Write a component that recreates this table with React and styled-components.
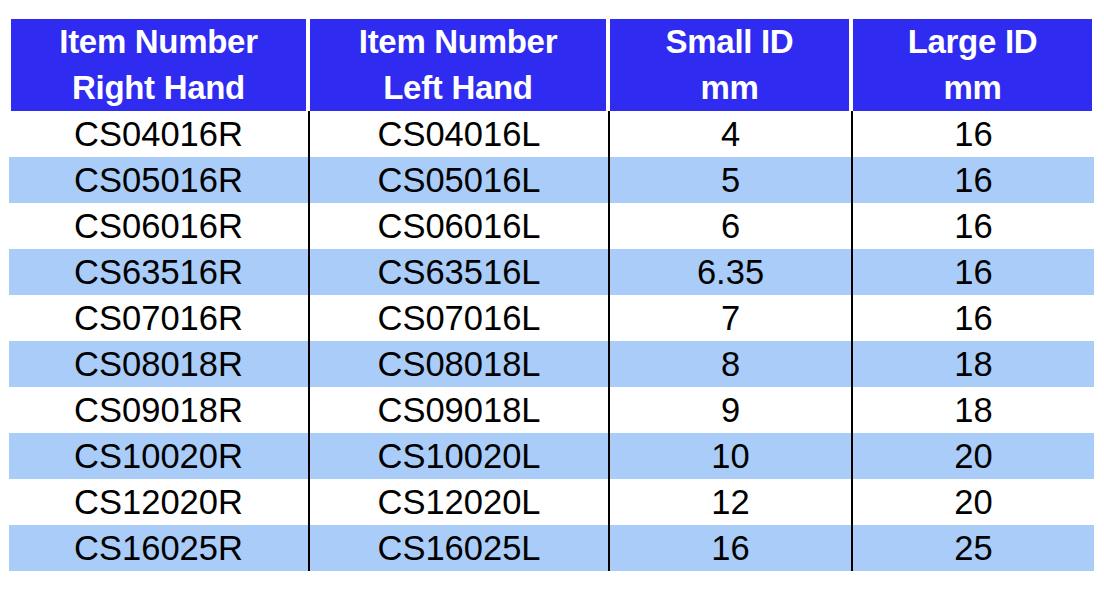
import React from 'react';
import styled, { createGlobalStyle } from 'styled-components';

const GlobalStyle = createGlobalStyle`
    body {
        margin: 0;
        background: #fff;
        font-family: "Liberation Sans", Arial, sans-serif;
    }
`;

const rows = [
    ['CS04016R', 'CS04016L', '4', '16'],
    ['CS05016R', 'CS05016L', '5', '16'],
    ['CS06016R', 'CS06016L', '6', '16'],
    ['CS63516R', 'CS63516L', '6.35', '16'],
    ['CS07016R', 'CS07016L', '7', '16'],
    ['CS08018R', 'CS08018L', '8', '18'],
    ['CS09018R', 'CS09018L', '9', '18'],
    ['CS10020R', 'CS10020L', '10', '20'],
    ['CS12020R', 'CS12020L', '12', '20'],
    ['CS16025R', 'CS16025L', '16', '25'],
];

const headers = [
    ['Item Number', 'Right Hand'],
    ['Item Number', 'Left Hand'],
    ['Small ID', 'mm'],
    ['Large ID', 'mm'],
];

const Table = styled.div`
    width: 1085px;
    margin: 19px 0 0 9px;

    display: grid;
    grid-template-columns: 299px 300px 243px 243px;
`;

const HeadCell = styled.div`
    height: 92px;

    border: solid #fff;
    border-width: 0 2px;
    background-color: #2f2bf1;
    color: #fff;

    font-weight: bold;
    font-size: 33px;
    line-height: 46px;
    text-align: center;
    letter-spacing: -0.3px;
`;

const Cell = styled.div`
    height: 46px;

    border-left: ${(props) => (props.first ? 'none' : '2px solid #000')};
    background-color: ${(props) => (props.shaded ? '#aaccf8' : '#fff')};
    color: #000;

    font-size: 34.5px;
    line-height: 46px;
    text-align: center;
`;

function App() {
    return (
        <>
            <GlobalStyle />
            <Table>
                {headers.map(([a, b], i) => (
                    <HeadCell key={'h' + i}>
                        {a}<br />{b}
                    </HeadCell>
                ))}
                {rows.map((row, r) =>
                    row.map((value, c) => (
                        <Cell key={r + '-' + c} first={c === 0} shaded={r % 2 === 1}>
                            {value}
                        </Cell>
                    ))
                )}
            </Table>
        </>
    );
}

export default App;
